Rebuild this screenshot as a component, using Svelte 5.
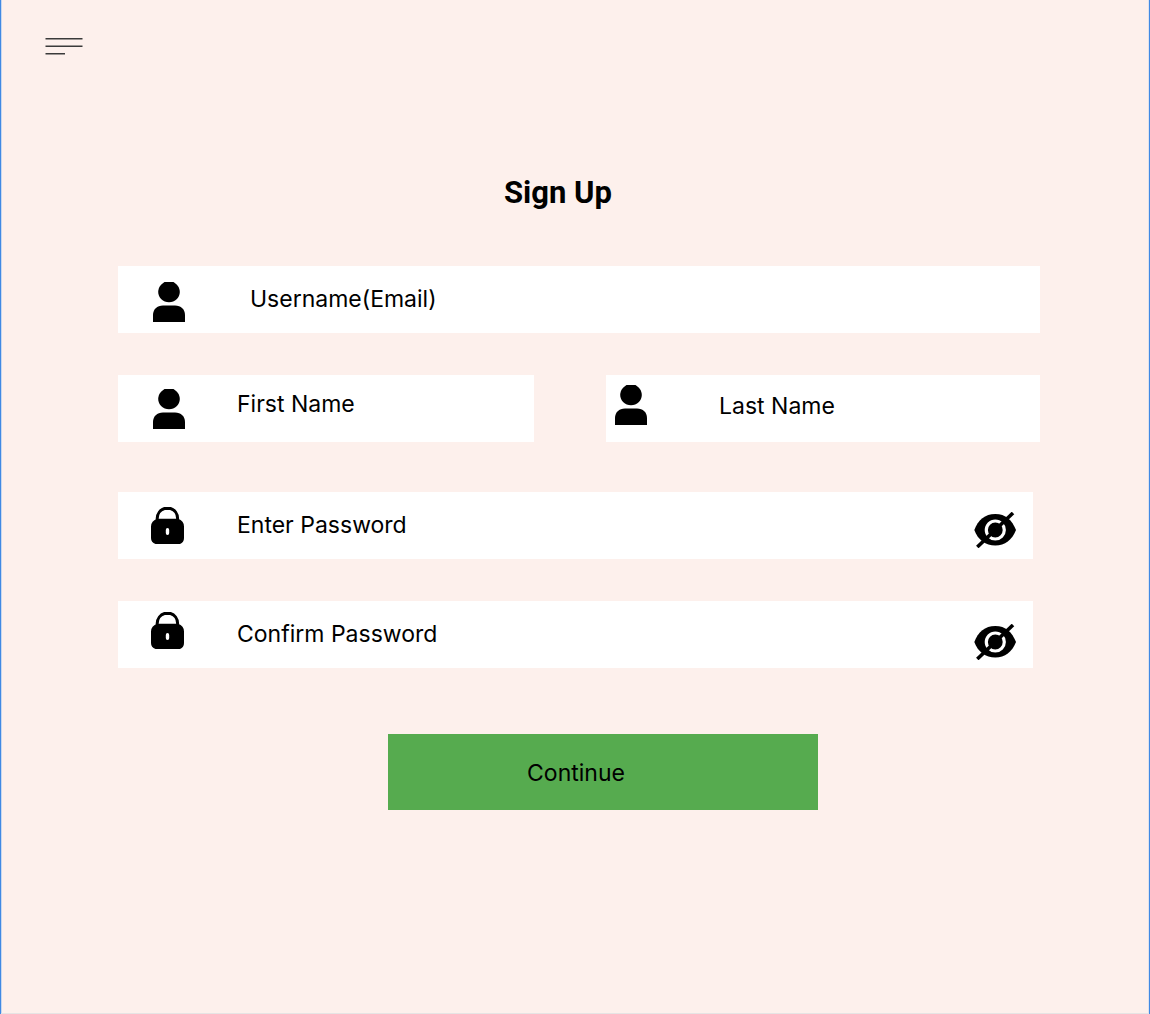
<script>
  let visible = $state({ password: false, confirm: false });
</script>

{#snippet userIcon()}
  <svg class="icon" width="34" height="40" viewBox="0 0 34 40" aria-hidden="true">
    <path d="M12.5 0H21.5C25.2 2.4 27.8 5.8 27.8 10C27.8 15.8 23 20.2 17 20.2S6.2 15.8 6.2 10C6.2 5.8 8.8 2.4 12.5 0Z" />
    <path d="M1 40V33C1 27.500 5 23.500 11 23.500H23C29 23.500 33 27.500 33 33V40Z" />
  </svg>
{/snippet}

{#snippet lockIcon()}
  <svg class="icon" width="34" height="38" viewBox="0 0 34 38" aria-hidden="true">
    <path d="M6.200 14V11.500C6.200 6.500 9.500 2.600 13.500 1.500H19.500C23.500 2.600 26.600 6.500 26.600 11.500V14" fill="none" stroke="#000" stroke-width="3" />
    <path fill-rule="evenodd" d="M6.500 11.800H27Q33 14 33 19.500V31Q33 35.500 29 37H4.500Q0 35.500 0 31V19.500Q0 14 6.500 11.800ZM16.500 21Q14.800 21 14.800 23V26Q14.800 28 16.500 28T18.200 26V23Q18.200 21 16.500 21Z" />
  </svg>
{/snippet}

{#snippet eyeIcon()}
  <svg width="44" height="36" viewBox="0 0 44 36" aria-hidden="true">
    <path d="M1.300 18C5 8 12 2 22.300 2S39 8 43 18C39 28 32 33.500 22.300 33.500S5 28 1.300 18Z" />
    <circle cx="22.300" cy="18" r="9" fill="none" stroke="#fff" stroke-width="3.200" />
    <path d="M4.300 35L40 1" stroke="#000" stroke-width="3.600" />
  </svg>
{/snippet}

<main class="page">
  <header>
    <button class="menu" type="button" aria-label="Open menu">
      <svg width="38" height="18" viewBox="0 0 38 18" fill="none" stroke="#3a3a3a" stroke-width="1.600" aria-hidden="true">
        <path d="M0.500 1.700H37.500M0.500 9.300H37.500M0.500 16.800H20" />
      </svg>
    </button>
  </header>

  <form onsubmit={(e) => e.preventDefault()}>
    <h1>Sign Up</h1>

    <label class="field email">
      {@render userIcon()}
      <input type="email" name="email" placeholder="Username(Email)" aria-label="Username(Email)" />
    </label>

    <div class="names">
      <label class="field first">
        {@render userIcon()}
        <input type="text" name="first" placeholder="First Name" aria-label="First Name" />
      </label>
      <label class="field last">
        {@render userIcon()}
        <input type="text" name="last" placeholder="Last Name" aria-label="Last Name" />
      </label>
    </div>

    <div class="field secret">
      {@render lockIcon()}
      <input type={visible.password ? 'text' : 'password'} name="password" placeholder="Enter Password" aria-label="Enter Password" />
      <button class="eye" type="button" aria-label="Show password" onclick={() => (visible.password = !visible.password)}>
        {@render eyeIcon()}
      </button>
    </div>

    <div class="field secret confirm">
      {@render lockIcon()}
      <input type={visible.confirm ? 'text' : 'password'} name="confirm" placeholder="Confirm Password" aria-label="Confirm Password" />
      <button class="eye" type="button" aria-label="Show confirmed password" onclick={() => (visible.confirm = !visible.confirm)}>
        {@render eyeIcon()}
      </button>
    </div>

    <button class="continue" type="submit">Continue</button>
  </form>
</main>

<style>
  :global(body) {
    margin: 0;
  }

  .page {
    box-sizing: border-box;
    min-height: 100vh;
    padding: 36px 109px 60px 117px;
    background: #fdf0ec;
    border: solid #4089e4;
    border-width: 0 1px;
    box-shadow: inset 0 -1px #e6e4e4, inset 1px 0 #c9d8ee, inset -1px 0 #dde2ee;
    font-family: Inter, 'Liberation Sans', sans-serif;
    color: #000;
  }

  button {
    padding: 0;
    border: 0;
    background: none;
    font: inherit;
    color: inherit;
    cursor: pointer;
  }

  svg {
    display: block;
  }

  header {
    height: 20px;
    margin-left: -73px;
  }

  .menu {
    display: block;
    padding-top: 1px;
  }

  form {
    padding-top: 117px;
  }

  h1 {
    margin: 0 0 53px;
    padding-right: 42px;
    font: 700 31px/40px Roboto, sans-serif;
    text-align: center;
  }

  .field {
    box-sizing: border-box;
    display: flex;
    align-items: flex-start;
    height: 67px;
    padding-left: 34px;
    background: #fff;
  }

  .icon {
    flex: none;
    margin: 15px 50px 0 0;
  }

  .email .icon {
    margin: 16px 63px 0 0;
  }

  input {
    flex: 1;
    align-self: stretch;
    min-width: 0;
    padding: 0 0 2px 1px;
    border: 0;
    outline: 0;
    background: transparent;
    font: 400 23px/32px Inter, 'Liberation Sans', sans-serif;
    color: #000;
  }

  input::placeholder {
    color: #000;
    opacity: 1;
  }

  .names {
    display: grid;
    grid-template-columns: minmax(0, 416fr) minmax(0, 434fr);
    gap: 72px;
    margin: 42px 0 50px;
  }

  .names .icon {
    margin-top: 14px;
  }

  .names input {
    padding-bottom: 9px;
  }

  .last {
    padding-left: 8px;
  }

  .last .icon {
    margin: 10px 70px 0 0;
  }

  .names .last input {
    padding-bottom: 6px;
  }

  .secret {
    margin-right: 7px;
    padding-left: 33px;
    padding-right: 16px;
  }

  .secret .icon {
    margin-right: 51px;
  }

  .confirm {
    margin-top: 42px;
  }

  .confirm .icon {
    margin-top: 11px;
  }

  .eye {
    margin-top: 20px;
  }

  .confirm .eye {
    margin-top: 23px;
  }

  .continue {
    display: block;
    width: calc(100% - 492px);
    height: 76px;
    margin: 66px 0 0 270px;
    padding: 2px 54px 0 0;
    background: #56ab4f;
    font-size: 23px;
    line-height: 32px;
  }
</style>
